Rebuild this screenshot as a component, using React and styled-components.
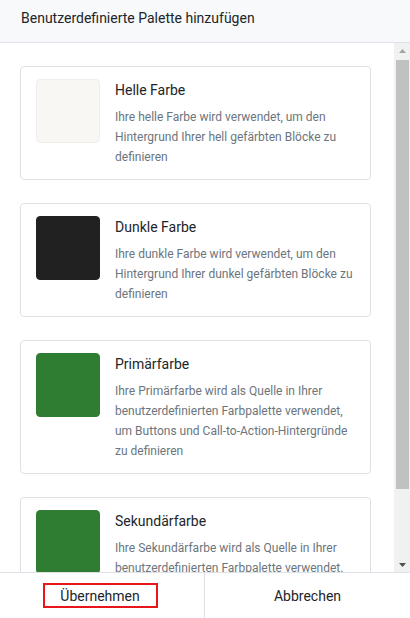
import React from "react";
import styled, { createGlobalStyle } from "styled-components";

const Global = createGlobalStyle`
  html, body { margin: 0; padding: 0; background: #fff; }
  body { font-family: Roboto, "Liberation Sans", Arial, sans-serif; }
  * { box-sizing: border-box; }
`;

const Dialog = styled.div`
  display: flex;
  flex-direction: column;
  width: 410px;
  height: 618px;
  background: #fff;
  overflow: hidden;
`;

const Header = styled.div`
  flex: 0 0 auto;
  height: 43px;
  padding: 8px 21px 0;
  background: #f8f9fa;
  border-bottom: 1px solid #dee2e6;
  font-size: 14px;
  line-height: 20px;
  color: #212529;
`;

const ScrollArea = styled.div`
  flex: 1 1 auto;
  min-height: 0;
  display: flex;
`;

const Content = styled.div`
  flex: 1 1 auto;
  min-width: 0;
  overflow: hidden;
  padding: 23px 23px 23px 20px;
  display: flex;
  flex-direction: column;
  gap: 23px;
`;

const Scrollbar = styled.div`
  flex: 0 0 16px;
  display: flex;
  flex-direction: column;
  background: #f1f1f1;
`;

const ScrollButton = styled.div`
  flex: 0 0 15px;
  display: flex;
  align-items: center;
  justify-content: center;
  padding-left: 1px;
`;

const Track = styled.div`
  flex: 1 1 auto;
  padding: 2px 1px 0 2px;
`;

const Thumb = styled.div`
  height: 429px;
  background: #c1c1c1;
`;

const Card = styled.div`
  flex: 0 0 auto;
  display: flex;
  align-items: flex-start;
  gap: 15px;
  padding: 12px 15px;
  border: 1px solid #dee2e6;
  border-radius: 4px;
  background: #fff;
`;

const Swatch = styled.div`
  flex: 0 0 64px;
  width: 64px;
  height: 64px;
  border-radius: 4px;
  background: ${(p) => p.$color};
  border: 1px solid ${(p) => (p.$outlined ? "#efeeea" : p.$color)};
`;

const Body = styled.div`
  flex: 1 1 auto;
  min-width: 0;
`;

const Title = styled.div`
  font-size: 14px;
  line-height: 22px;
  color: #212529;
  margin-bottom: 6px;
`;

const Desc = styled.div`
  font-size: 12px;
  line-height: 20px;
  color: #6c757d;
`;

const Footer = styled.div`
  flex: 0 0 46px;
  display: grid;
  grid-template-columns: 204px 1fr;
  border-top: 1px solid #dee2e6;
  background: #fff;
`;

const FooterCell = styled.div`
  display: flex;
  align-items: center;
  justify-content: center;
  border-left: ${(p) => (p.$divider ? "1px solid #dee2e6" : "none")};
`;

const FooterButton = styled.button`
  font-family: Roboto, "Liberation Sans", Arial, sans-serif;
  font-size: 14px;
  line-height: 20px;
  color: #212529;
  background: transparent;
  border: 2px solid ${(p) => (p.$highlight ? "#e8151b" : "transparent")};
  width: ${(p) => (p.$highlight ? "115px" : "auto")};
  height: 25px;
  padding: 0 8px;
  margin: ${(p) => (p.$highlight ? "0 4px 0 0" : "0")};
  cursor: pointer;
  display: flex;
  align-items: center;
  justify-content: center;
`;

const Arrow = ({ down }) => (
  <svg width="7" height="4" viewBox="0 0 7 4" aria-hidden="true">
    <polygon
      points={down ? "0,0 7,0 3.5,4" : "0,4 7,4 3.5,0"}
      fill={down ? "#505050" : "#a3a3a3"}
    />
  </svg>
);

const items = [
  {
    title: "Helle Farbe",
    color: "#f8f7f4",
    outlined: true,
    desc: "Ihre helle Farbe wird verwendet, um den Hintergrund Ihrer hell gefärbten Blöcke zu definieren",
  },
  {
    title: "Dunkle Farbe",
    color: "#212121",
    desc: "Ihre dunkle Farbe wird verwendet, um den Hintergrund Ihrer dunkel gefärbten Blöcke zu definieren",
  },
  {
    title: "Primärfarbe",
    color: "#2e7d32",
    desc: "Ihre Primärfarbe wird als Quelle in Ihrer benutzerdefinierten Farbpalette verwendet, um Buttons und Call-to-Action-Hintergründe zu definieren",
  },
  {
    title: "Sekundärfarbe",
    color: "#2e7d32",
    desc: "Ihre Sekundärfarbe wird als Quelle in Ihrer benutzerdefinierten Farbpalette verwendet. um Akzente und sekundäre Hintergründe zu definieren",
  },
];

export default function App() {
  return (
    <>
      <Global />
      <Dialog>
        <Header>Benutzerdefinierte Palette hinzufügen</Header>
        <ScrollArea>
          <Content>
            {items.map((it) => (
              <Card key={it.title}>
                <Swatch $color={it.color} $outlined={it.outlined} />
                <Body>
                  <Title>{it.title}</Title>
                  <Desc>{it.desc}</Desc>
                </Body>
              </Card>
            ))}
          </Content>
          <Scrollbar>
            <ScrollButton>
              <Arrow />
            </ScrollButton>
            <Track>
              <Thumb />
            </Track>
            <ScrollButton>
              <Arrow down />
            </ScrollButton>
          </Scrollbar>
        </ScrollArea>
        <Footer>
          <FooterCell>
            <FooterButton $highlight>Übernehmen</FooterButton>
          </FooterCell>
          <FooterCell $divider>
            <FooterButton>Abbrechen</FooterButton>
          </FooterCell>
        </Footer>
      </Dialog>
    </>
  );
}
